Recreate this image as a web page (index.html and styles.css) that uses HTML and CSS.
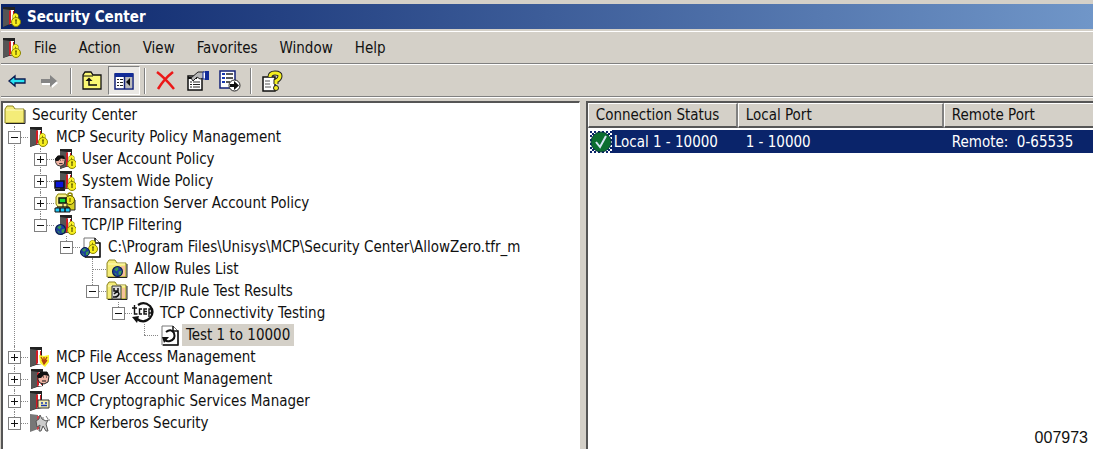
FILE: index.html
```html
<!DOCTYPE html>
<html lang="en">
<head>
    <meta charset="UTF-8">
    <meta name="viewport" content="width=device-width, initial-scale=1.0">
    <title>Security Center</title>
    <link rel="stylesheet" href="styles.css">
</head>
<body>

<!-- Shared icon parts -->
<svg class="defs" aria-hidden="true">
    <symbol id="cabinet" viewBox="0 0 22 22">
        <path d="M2 1h12v17l-6 1-6 2z" fill="#222"/>
        <path d="M2 3l7 1v14l-7 3z" fill="#555"/>
        <path d="M9 4h4v14H9z" fill="#fff"/>
        <path d="M8 5l2-1v13l-2 2z" fill="#d01c24"/>
        <path d="M12 5h1v12h-1z" fill="#d01c24"/>
    </symbol>
    <symbol id="lock" viewBox="0 0 22 22">
        <path d="M13 14V9.500q1.500-2 3 0V12" fill="none" stroke="#8a8400" stroke-width="3"/>
        <path d="M13 14V9.500q1.500-2 3 0V12" fill="none" stroke="#fbf32c" stroke-width="2"/>
        <circle cx="15" cy="16" r="4.500" fill="#f6ee20" stroke="#8a8400"/>
        <path d="M15 14v4M14 14h2" stroke="#5d5800" stroke-width="1.200"/>
    </symbol>
    <symbol id="globe" viewBox="0 0 10 10">
        <circle cx="5" cy="5" r="4.500" fill="#1c3f9e" stroke="#0b1c50"/>
        <path d="M2 3l3-2 1 2-2 2zM6 5l3-1-1 4-2 0zM2 6l2 1v2z" fill="#3a9a50"/>
    </symbol>
    <symbol id="folder" viewBox="0 0 22 22">
        <path d="M1 19V5l2-3h6l2 3h9v14z" fill="#f4ec78" stroke="#8c8420"/>
        <path d="M2 19.500h19V6" fill="none" stroke="#222"/>
        <path d="M2 6h17" stroke="#fffcc0"/>
    </symbol>
    <symbol id="page" viewBox="0 0 22 22">
        <path d="M4 2h11l5 5v14H4z" fill="#fff" stroke="#777"/>
        <path d="M15 2v5h5v14H5" fill="none" stroke="#111" stroke-width="1.500"/>
    </symbol>
    <symbol id="face" viewBox="0 0 14 14">
        <path d="M2 4l3-3h6l2 4-1 6-4 2-4-1-2-3z" fill="#f0b4a4" stroke="#222"/>
        <path d="M1 5l3-4h7l2 4-5-1-3 3H2z" fill="#111"/>
        <path d="M7 6h1M10 6h1M6 10h4" stroke="#111"/>
    </symbol>
</svg>

<header class="title-bar">
    <svg class="icon" viewBox="0 0 22 22" aria-hidden="true"><use href="#cabinet"/><use href="#lock"/></svg>
    <h1>Security Center</h1>
</header>

<nav class="menu-bar">
    <svg class="icon" viewBox="0 0 22 22" aria-hidden="true"><use href="#cabinet"/><use href="#lock"/></svg>
    <button>File</button>
    <button>Action</button>
    <button>View</button>
    <button>Favorites</button>
    <button>Window</button>
    <button>Help</button>
</nav>

<div class="toolbar">
    <button aria-label="Back">
        <svg class="icon" viewBox="0 0 22 22"><path d="M2 11l6-5v3h10v4H8v3z" fill="#28e4f4" stroke="#0a1a50" stroke-width="1.300"/></svg>
    </button>
    <button aria-label="Forward">
        <svg class="icon" viewBox="0 0 22 22">
            <path d="M3 10h9V7l7 6-6 5v-3H3z" fill="#fff"/>
            <path d="M2 9h9V5l7 6-7 6v-4H2z" fill="#858585"/>
        </svg>
    </button>
    <span class="separator"></span>
    <button aria-label="Up one level">
        <svg class="icon" viewBox="0 0 22 22">
            <path d="M2 19V5l2-3h6l2 3h8v14z" fill="#fbf874" stroke="#111" stroke-width="1.300"/>
            <path d="M2 6h10" stroke="#111"/>
            <path d="M8 9v6h8" fill="none" stroke="#111" stroke-width="1.500"/>
            <path d="M4.500 11L8 7.500l3.500 3.500z" fill="#111"/>
        </svg>
    </button>
    <button class="pressed" aria-label="Show/Hide console tree">
        <svg class="icon" viewBox="0 0 22 22">
            <path d="M2 4h18v15H2z" fill="#fff" stroke="#122078" stroke-width="1.500"/>
            <path d="M2 3h18v4H2z" fill="#122c98"/>
            <path d="M12 7h7v11h-7z" fill="#bbb"/>
            <path d="M11.500 6v13" stroke="#122078" stroke-width="1.500"/>
            <path d="M4 9.500h2M4 12.500h2M4 15.500h2M7 9.500h3M7 12.500h3M7 15.500h3" stroke="#222"/>
            <path d="M17 8v8l-4-4z" fill="#111"/>
        </svg>
    </button>
    <span class="separator"></span>
    <button aria-label="Delete">
        <svg class="icon" viewBox="0 0 22 22"><path d="M2 2q8 6 17 17M18 2Q9 9 3 19" fill="none" stroke="#ec1818" stroke-width="2.500"/></svg>
    </button>
    <button aria-label="Properties">
        <svg class="icon" viewBox="0 0 22 22">
            <path d="M1 6h14v14H1z" fill="#fff" stroke="#111" stroke-width="1.500"/>
            <path d="M1 8h9" stroke="#111" stroke-width="2"/>
            <path d="M3 12h2M6 12h7M3 14.500h2M6 14.500h7M3 17h2M6 17h7" stroke="#222"/>
            <path d="M4 8l7-6h6v6l-4 1-3-2-4 4z" fill="#b8b8b8" stroke="#222"/>
            <path d="M16 2h3v7h-3z" fill="#fff" stroke="#122c98"/>
            <path d="M18 1h4v9h-4z" fill="#122c98"/>
        </svg>
    </button>
    <button aria-label="Export list">
        <svg class="icon" viewBox="0 0 22 22">
            <path d="M1 1h15v17H1z" fill="#fff" stroke="#122078" stroke-width="1.500"/>
            <path d="M3 4h3M3 8h3M3 12h3" stroke="#1838b0" stroke-width="2"/>
            <path d="M7 4h7M7 8h7M7 12h4" stroke="#222" stroke-width="1.300"/>
            <circle cx="15.500" cy="15.500" r="5.500" fill="#fff" stroke="#222"/>
            <path d="M11 14h4v-3l5 4.500-5 4.500v-3h-4z" fill="#111"/>
        </svg>
    </button>
    <span class="separator"></span>
    <button aria-label="Help">
        <svg class="icon" viewBox="0 0 22 22">
            <path d="M2 7h12v14H2z" fill="#fff" stroke="#111" stroke-width="1.500"/>
            <path d="M4 11h5M4 14h5M4 17h6" stroke="#555"/>
            <path d="M9 7q0-4 5-4 5 0 5 3 0 3-4 5v3" fill="none" stroke="#222" stroke-width="5"/>
            <path d="M9 7q0-4 5-4 5 0 5 3 0 3-4 5v3" fill="none" stroke="#f4ee20" stroke-width="3"/>
            <circle cx="15" cy="18" r="2.500" fill="#f4ee20" stroke="#222"/>
        </svg>
    </button>
</div>

<main class="panes">

    <!-- Console tree -->
    <section class="tree">
        <div class="row">
            <svg class="icon" viewBox="0 0 22 22"><use href="#folder"/></svg>
            <span class="label">Security Center</span>
        </div>
        <ul>
            <li>
                <div class="row">
                    <span class="branch"><button class="toggle open" aria-label="Collapse"></button></span>
                    <svg class="icon" viewBox="0 0 22 22"><use href="#cabinet"/><use href="#lock"/></svg>
                    <span class="label">MCP Security Policy Management</span>
                </div>
                <ul>
                    <li>
                        <div class="row">
                            <span class="branch"><button class="toggle" aria-label="Expand"></button></span>
                            <svg class="icon" viewBox="0 0 22 22"><use href="#cabinet" x="4"/><use href="#lock" x="3"/><use href="#face" x="0" y="6" width="12" height="14"/></svg>
                            <span class="label">User Account Policy</span>
                        </div>
                    </li>
                    <li>
                        <div class="row">
                            <span class="branch"><button class="toggle" aria-label="Expand"></button></span>
                            <svg class="icon" viewBox="0 0 22 22">
                                <use href="#cabinet" x="4"/><use href="#lock" x="3"/>
                                <path d="M1 11h9v7H1z" fill="#0a14d8" stroke="#111" stroke-width="1.500"/>
                                <path d="M1 20h10" stroke="#222" stroke-width="2"/>
                            </svg>
                            <span class="label">System Wide Policy</span>
                        </div>
                    </li>
                    <li>
                        <div class="row">
                            <span class="branch"><button class="toggle" aria-label="Expand"></button></span>
                            <svg class="icon" viewBox="0 0 22 22">
                                <path d="M4 2h8l2 3v10H4l-2-3V5z" fill="#f7f08a" stroke="#8a8400"/>
                                <path d="M13 8h8v10h-8z" fill="#d8d020" stroke="#222"/>
                                <circle cx="16" cy="8" r="4.500" fill="#efe620" stroke="#555000"/>
                                <path d="M14 5V2q2-2 4 0v3M16 6v4" fill="none" stroke="#8a8400" stroke-width="1.500"/>
                                <path d="M5 6h7v5H5z" fill="#18d838" stroke="#111" stroke-width="1.500"/>
                                <path d="M9 12v3M3 16v-1h12v1" fill="none" stroke="#111"/>
                                <path d="M1 16h5v4H1zM6 16h5v4H6zM11 16h5v4h-5z" fill="#20c8f8" stroke="#111"/>
                            </svg>
                            <span class="label">Transaction Server Account Policy</span>
                        </div>
                    </li>
                    <li>
                        <div class="row">
                            <span class="branch"><button class="toggle open" aria-label="Collapse"></button></span>
                            <svg class="icon" viewBox="0 0 22 22"><use href="#cabinet" x="4"/><use href="#lock" x="3"/><use href="#globe" x="1" y="10" width="11" height="11"/></svg>
                            <span class="label">TCP/IP Filtering</span>
                        </div>
                        <ul>
                            <li>
                                <div class="row">
                                    <span class="branch"><button class="toggle open" aria-label="Collapse"></button></span>
                                    <svg class="icon" viewBox="0 0 22 22">
                                        <use href="#page"/>
                                        <use href="#lock" x="-2" y="-3"/>
                                        <use href="#globe" x="0" y="11" width="10" height="10"/>
                                    </svg>
                                    <span class="label">C:\Program Files\Unisys\MCP\Security Center\AllowZero.tfr_m</span>
                                </div>
                                <ul>
                                    <li>
                                        <div class="row">
                                            <span class="branch"></span>
                                            <svg class="icon" viewBox="0 0 22 22"><use href="#folder"/><path d="M15 8h4v10h-4z" fill="#f6c09a"/><use href="#globe" x="6" y="8" width="11" height="11"/></svg>
                                            <span class="label">Allow Rules List</span>
                                        </div>
                                    </li>
                                    <li>
                                        <div class="row">
                                            <span class="branch"><button class="toggle open" aria-label="Collapse"></button></span>
                                            <svg class="icon" viewBox="0 0 22 22">
                                                <use href="#folder"/>
                                                <path d="M16 8h3v10h-3z" fill="#f6c09a"/>
                                                <path d="M6 6h9v13H6z" fill="#ddd" stroke="#333"/>
                                                <path d="M8 8v3h4V8M8 14q4-4 5 0-1 3-4 3M7 17h4" fill="none" stroke="#111" stroke-width="1.500"/>
                                            </svg>
                                            <span class="label">TCP/IP Rule Test Results</span>
                                        </div>
                                        <ul>
                                            <li>
                                                <div class="row">
                                                    <span class="branch"><button class="toggle open" aria-label="Collapse"></button></span>
                                                    <svg class="icon" viewBox="0 0 22 22">
                                                        <path d="M6 3Q12-1 18 4q5 6 0 12-6 6-13 1" fill="none" stroke="#111" stroke-width="2.200"/>
                                                        <path d="M0 15l7-1-2 7z" fill="#111"/>
                                                        <path d="M2.500 3v9h3M0 6h5M10 7H7.500v5H10M15 7h-3v5h3M12 9.500h3M17 15V7h2.500v4H17" fill="none" stroke="#111" stroke-width="1.400"/>
                                                    </svg>
                                                    <span class="label">TCP Connectivity Testing</span>
                                                </div>
                                                <ul>
                                                    <li>
                                                        <div class="row">
                                                            <span class="branch"></span>
                                                            <svg class="icon" viewBox="0 0 22 22">
                                                                <use href="#page"/>
                                                                <path d="M8 8q5-4 8 1 2 6-4 8-3 1-5-1" fill="none" stroke="#111" stroke-width="2"/>
                                                                <path d="M4 13h7l-5 6z" fill="#111"/>
                                                            </svg>
                                                            <span class="label selected">Test 1 to 10000</span>
                                                        </div>
                                                    </li>
                                                </ul>
                                            </li>
                                        </ul>
                                    </li>
                                </ul>
                            </li>
                        </ul>
                    </li>
                </ul>
            </li>
            <li>
                <div class="row">
                    <span class="branch"><button class="toggle" aria-label="Expand"></button></span>
                    <svg class="icon" viewBox="0 0 22 22">
                        <use href="#cabinet"/>
                        <path d="M11 9l5 1 5-1v7l-4 5-5-4z" fill="#fbf32c"/>
                        <path d="M13 11l3 5 3-5M16 11v8M14 14l2 4 3-4" fill="none" stroke="#b04010" stroke-width="1.300"/>
                    </svg>
                    <span class="label">MCP File Access Management</span>
                </div>
            </li>
            <li>
                <div class="row">
                    <span class="branch"><button class="toggle" aria-label="Expand"></button></span>
                    <svg class="icon" viewBox="0 0 22 22"><use href="#cabinet" x="1"/><use href="#face" x="8" y="3" width="14" height="14"/></svg>
                    <span class="label">MCP User Account Management</span>
                </div>
            </li>
            <li>
                <div class="row">
                    <span class="branch"><button class="toggle" aria-label="Expand"></button></span>
                    <svg class="icon" viewBox="0 0 22 22">
                        <use href="#cabinet"/>
                        <path d="M10 10h11v8H10z" fill="#f2eeb0" stroke="#333"/>
                        <path d="M13 13h2M17 13h2M13 15.500h6" stroke="#1838b0" stroke-width="1.300"/>
                    </svg>
                    <span class="label">MCP Cryptographic Services Manager</span>
                </div>
            </li>
            <li>
                <div class="row">
                    <span class="branch"><button class="toggle" aria-label="Expand"></button></span>
                    <svg class="icon" viewBox="0 0 22 22">
                        <path d="M2 2l8 1v14l-8 3z" fill="#777"/>
                        <path d="M9 4h2v13l-2 1z" fill="#d04048"/>
                        <path d="M8 9l3-2 1-4 2 4 4 2 2-1-2 4 2 7h-2l-3-5-2 5h-2l1-6-3 2z" fill="#ccc" stroke="#555"/>
                        <path d="M18 4l2 3M20 8h2M14 6h2" stroke="#777"/>
                    </svg>
                    <span class="label">MCP Kerberos Security</span>
                </div>
            </li>
        </ul>
    </section>

    <!-- Test results -->
    <section class="details">
        <table>
            <thead>
                <tr>
                    <th class="col-status">Connection Status</th>
                    <th class="col-local">Local Port</th>
                    <th>Remote Port</th>
                </tr>
            </thead>
            <tbody>
                <tr>
                    <td class="status">
                        <div class="status-cell">
                            <svg class="icon" viewBox="0 0 22 22" aria-hidden="true">
                                <defs>
                                    <pattern id="dither" width="4" height="4" patternUnits="userSpaceOnUse">
                                        <path d="M0 0h2v2H0zM2 2h2v2H2z" fill="#0a246a"/>
                                    </pattern>
                                </defs>
                                <path d="M0 0h22v22H0z" fill="#fff"/>
                                <path d="M0 0h22v22H0z" fill="url(#dither)"/>
                                <circle cx="11" cy="11" r="10" fill="#0c6e30" stroke="#083c40"/>
                                <path d="M6 11l4 5 6-11" fill="none" stroke="#d4e4f4" stroke-width="2"/>
                            </svg>
                            <span>Local 1 - 10000</span>
                        </div>
                    </td>
                    <td>1 - 10000</td>
                    <td>Remote:&nbsp; 0-65535</td>
                </tr>
            </tbody>
        </table>
        <p class="figure-number">007973</p>
    </section>

</main>

</body>
</html>
```
FILE: styles.css
```css
* {
    box-sizing: border-box;
}
body {
    display: flex;
    flex-direction: column;
    min-height: 100vh;
    margin: 0;
    padding: 4px 0 0 1px;
    font-family: "DejaVu Sans Condensed", Tahoma, sans-serif;
    font-size: 15px;
    line-height: 22px;
    color: #111;
    background: #d4d0c8;
}
button {
    padding: 0;
    border: none;
    font: inherit;
    color: inherit;
    background: none;
}
ul {
    list-style: none;
    margin: 0;
    padding: 0;
}
.defs {
    position: absolute;
    width: 0;
    height: 0;
}
.icon {
    flex: none;
    display: block;
    width: 22px;
    height: 22px;
}

/* Title and menu */
.title-bar {
    display: flex;
    align-items: center;
    gap: 4px;
    height: 25px;
    color: #fff;
    background: linear-gradient(to right, #0a246a, #7096c8);
}
.title-bar h1 {
    margin: 0;
    font-size: 15px;
    font-weight: bold;
}
.menu-bar {
    display: flex;
    align-items: center;
    gap: 22px;
    height: 33px;
    border-top: 1px solid #fff;
    border-bottom: 1px solid #808080;
    margin-top: 2px;
}
.menu-bar .icon {
    margin-right: -11px;
}

/* Toolbar */
.toolbar {
    display: flex;
    align-items: center;
    height: 33px;
    padding-left: 1px;
    border-top: 1px solid #fff;
    border-bottom: 1px solid #808080;
}
.toolbar button {
    display: flex;
    align-items: center;
    justify-content: center;
    width: 32px;
    height: 29px;
}
.toolbar .pressed {
    border: 1px solid;
    border-color: #808080 #fff #fff #808080;
    background: #ebe9e5;
}
.separator {
    width: 2px;
    height: 26px;
    margin: 0 4px;
    border-left: 1px solid #808080;
    border-right: 1px solid #fff;
}

/* Panes */
.panes {
    flex: 1;
    display: flex;
    gap: 6px;
    padding-top: 3px;
    border-top: 1px solid #fff;
}
.tree {
    width: 53%;
    padding: 1px;
    border: 2px solid #555;
    border-right: 1px solid #fff;
    border-bottom: none;
    background: #fff;
}
.details {
    flex: 1;
    display: flex;
    flex-direction: column;
    justify-content: space-between;
    border-top: 2px solid #555;
    border-left: 2px solid #555;
    background: #fff;
}

/* Tree */
.tree li {
    position: relative;
}
.tree li ul {
    margin-left: 26px;
}
.tree li::before {
    content: "";
    position: absolute;
    top: 0;
    bottom: 0;
    left: 10px;
    border-left: 1px dotted #888;
}
.tree li:last-child::before {
    bottom: auto;
    height: 11px;
}
.row {
    display: flex;
    align-items: center;
    height: 22px;
}
.branch {
    position: relative;
    display: flex;
    align-items: center;
    width: 24px;
    height: 22px;
    padding-left: 4px;
}
.branch::before {
    content: "";
    position: absolute;
    top: 11px;
    left: 10px;
    right: 0;
    border-top: 1px dotted #888;
}
.toggle {
    position: relative;
    width: 13px;
    height: 13px;
    border: 1px solid #808080;
    background:
        linear-gradient(#111, #111) center / 7px 1px no-repeat,
        linear-gradient(#111, #111) center / 1px 7px no-repeat,
        #fff;
}
.toggle.open {
    background:
        linear-gradient(#111, #111) center / 7px 1px no-repeat,
        #fff;
}
.label {
    margin-left: 2px;
    padding: 0 4px;
    white-space: nowrap;
}
.selected {
    background: #d4d0c8;
}

/* List */
table {
    width: 100%;
    table-layout: fixed;
    border-collapse: separate;
    border-spacing: 0;
}
th, td {
    height: 23px;
    padding: 0 8px;
    text-align: left;
    white-space: nowrap;
}
th {
    height: 25px;
    padding: 0 7px;
    font-weight: normal;
    border: 1px solid;
    border-color: #fff #808080 #555 #fff;
    border-right-width: 2px;
    border-bottom-width: 2px;
    background: #d4d0c8;
}
th:last-child {
    border-right: none;
}
.col-status {
    width: 150px;
}
.col-local {
    width: 206px;
}
tbody::before {
    content: "";
    display: block;
    height: 2px;
}
td {
    color: #fff;
    background: #0a246a;
}
td.status {
    padding: 0 0 0 2px;
    background: linear-gradient(to right, #fff 24px, #0a246a 24px);
}
.status-cell {
    display: flex;
    align-items: center;
    gap: 2px;
}
.figure-number {
    margin: 0;
    padding-right: 5px;
    font-family: "Liberation Sans", Arial, sans-serif;
    font-size: 16px;
    text-align: right;
}
```
